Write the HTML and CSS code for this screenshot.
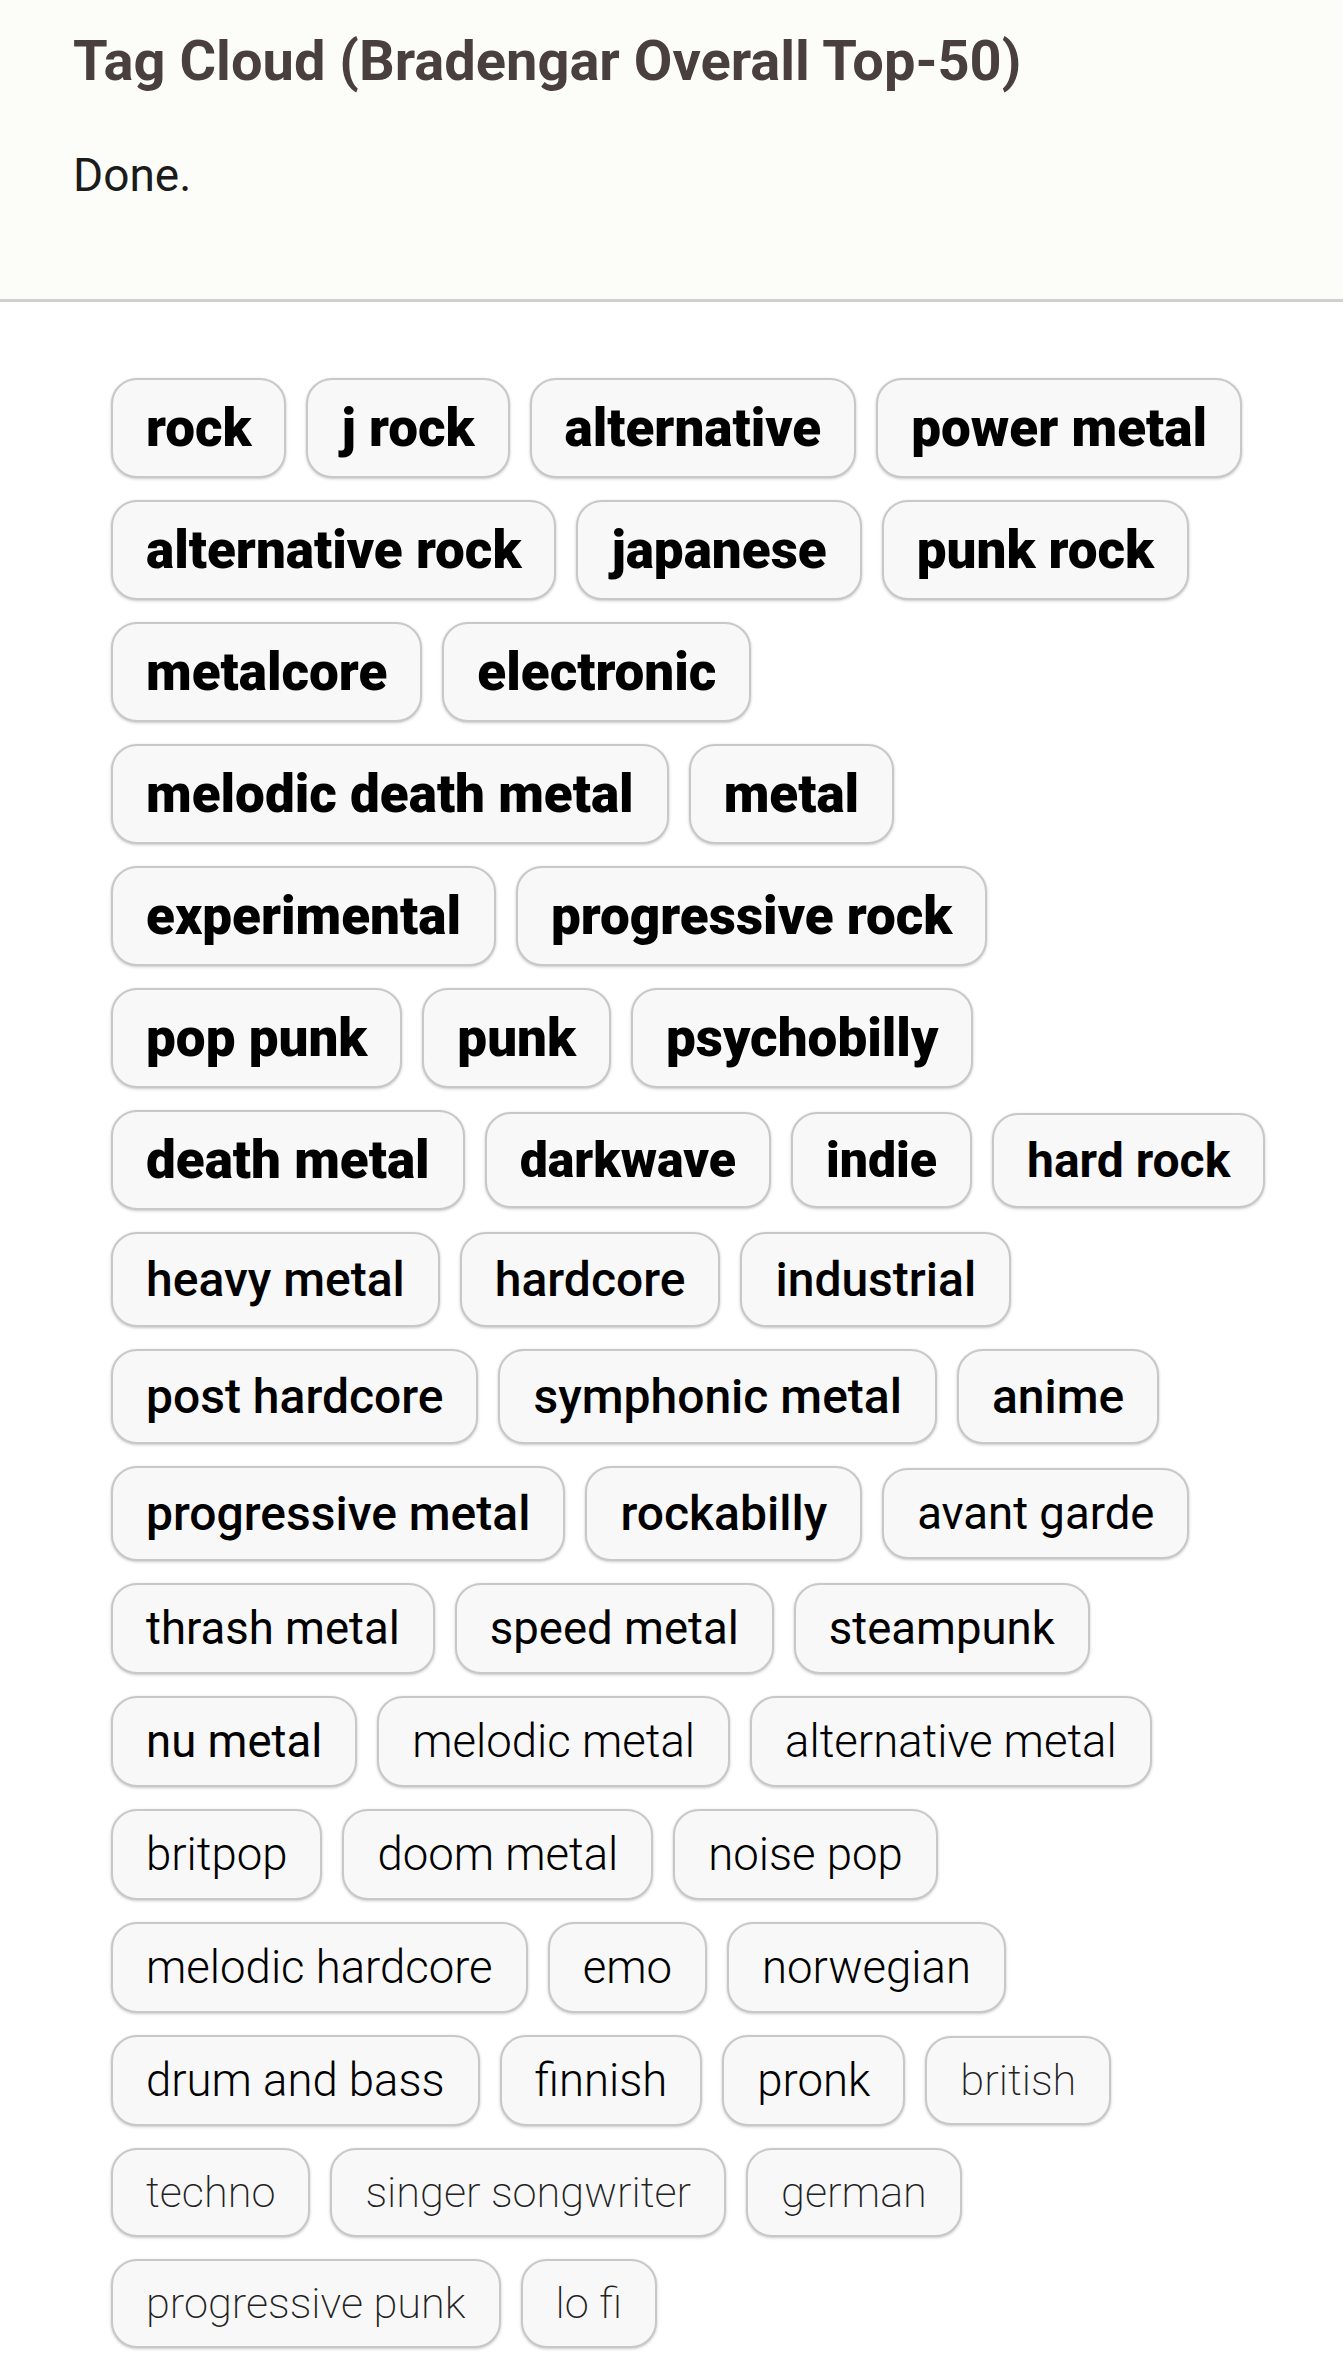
FILE: index.html
```html
<!DOCTYPE html>
<html lang="en">
<head>
<meta charset="utf-8">
<title>Tag Cloud (Bradengar Overall Top-50)</title>
<link rel="stylesheet" href="styles.css">
</head>
<body>
<header class="head">
  <h1 class="title">Tag Cloud (Bradengar Overall Top-50)</h1>
  <p class="status">Done.</p>
</header>
<main class="cloud">
  <span class="tag t1">rock</span>
  <span class="tag t1">j rock</span>
  <span class="tag t1">alternative</span>
  <span class="tag t1">power metal</span>
  <span class="tag t1">alternative rock</span>
  <span class="tag t1">japanese</span>
  <span class="tag t1">punk rock</span>
  <span class="tag t1">metalcore</span>
  <span class="tag t1">electronic</span>
  <span class="tag t1">melodic death metal</span>
  <span class="tag t1">metal</span>
  <span class="tag t1">experimental</span>
  <span class="tag t1">progressive rock</span>
  <span class="tag t1">pop punk</span>
  <span class="tag t1">punk</span>
  <span class="tag t1">psychobilly</span>
  <span class="tag t1">death metal</span>
  <span class="tag t1b">darkwave</span>
  <span class="tag t1b">indie</span>
  <span class="tag t2">hard rock</span>
  <span class="tag t3">heavy metal</span>
  <span class="tag t3">hardcore</span>
  <span class="tag t3">industrial</span>
  <span class="tag t4">post hardcore</span>
  <span class="tag t4">symphonic metal</span>
  <span class="tag t4">anime</span>
  <span class="tag t4">progressive metal</span>
  <span class="tag t4">rockabilly</span>
  <span class="tag t5">avant garde</span>
  <span class="tag t5">thrash metal</span>
  <span class="tag t5">speed metal</span>
  <span class="tag t5">steampunk</span>
  <span class="tag t5">nu metal</span>
  <span class="tag t6">melodic metal</span>
  <span class="tag t6">alternative metal</span>
  <span class="tag t6">britpop</span>
  <span class="tag t6">doom metal</span>
  <span class="tag t6">noise pop</span>
  <span class="tag t6">melodic hardcore</span>
  <span class="tag t6">emo</span>
  <span class="tag t6">norwegian</span>
  <span class="tag t6">drum and bass</span>
  <span class="tag t6">finnish</span>
  <span class="tag t6">pronk</span>
  <span class="tag t7">british</span>
  <span class="tag t7">techno</span>
  <span class="tag t7">singer songwriter</span>
  <span class="tag t7">german</span>
  <span class="tag t7">progressive punk</span>
  <span class="tag t7">lo fi</span>
</main>
</body>
</html>
```
FILE: styles.css
```css
html, body {
  margin: 0;
  padding: 0;
  background: #ffffff;
  font-family: Roboto, "Noto Sans", "Liberation Sans", sans-serif;
}

.head {
  background: #fcfdf8;
  border-bottom: 3px solid #d0d0d0;
  padding: 28px 40px 97px 73px;
}

.title {
  margin: 0;
  font-size: 56px;
  font-weight: 700;
  line-height: normal;
  color: #4a3f3f;
}

.status {
  margin: 54px 0 0;
  font-size: 46px;
  font-weight: 400;
  line-height: normal;
  color: #1b1b1b;
}

.cloud {
  display: flex;
  flex-wrap: wrap;
  align-items: center;
  gap: 22px 20px;
  padding: 76px 60px 20px 111px;
}

.tag {
  display: inline-block;
  padding: 17px 33px;
  border: 2px solid #cbc7c7;
  border-radius: 26px;
  background: #f8f8f8;
  box-shadow: 0 1px 3px rgba(0, 0, 0, 0.22);
  color: #000;
  line-height: normal;
  white-space: nowrap;
}

.t1 { font-size: 53px; font-weight: 900; }
.t1b { font-size: 50px; font-weight: 900; }
.t2 { font-size: 48px; font-weight: 700; }
.t3 { font-size: 48px; font-weight: 500; }
.t4 { font-size: 48px; font-weight: 500; }
.t5 { font-size: 45.5px; font-weight: 400; }
.t6 { font-size: 45.5px; font-weight: 300; }
.t7 { font-size: 43.3px; font-weight: 200; color: #222; }
```
